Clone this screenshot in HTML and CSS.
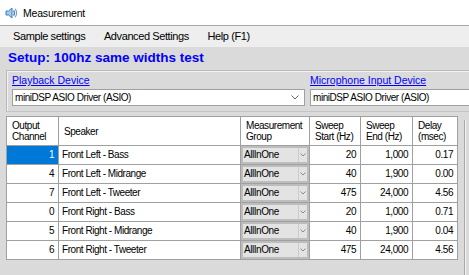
FILE: index.html
```html
<!DOCTYPE html>
<html lang="en-US">

<head>
    <title>Measurement</title>
    <meta name="viewport" content="width=device-width, initial-scale=1.0" />
    <link rel="stylesheet" href="styles.css">
</head>

<body>
    <div class="window">
        <div class="titlebar">
            <svg class="app-icon" width="13" height="12" viewBox="0 0 13 12">
                <path d="M1 4 L3.5 4 L7 1 L7 11 L3.5 8 L1 8 Z" fill="#a9cbea" stroke="#3f7fbf" stroke-width="1" stroke-linejoin="round" />
                <path d="M8.6 3.4 Q10.4 6 8.6 8.6" fill="none" stroke="#3f7fbf" stroke-width="1.3" />
                <path d="M10.2 1.8 Q13 6 10.2 10.2" fill="none" stroke="#6aa0d4" stroke-width="1.1" />
            </svg>
            <span class="title-text">Measurement</span>
        </div>

        <nav class="menubar">
            <span class="menu-item">Sample settings</span>
            <span class="menu-item">Advanced Settings</span>
            <span class="menu-item">Help (F1)</span>
        </nav>

        <main class="content">
            <h1 class="setup-title">Setup: 100hz same widths test</h1>

            <section class="devices">
                <div class="device device-playback">
                    <a href="#" class="device-link">Playback Device</a>
                    <div class="combo">
                        <span class="combo-text">miniDSP ASIO Driver (ASIO)</span>
                        <svg class="chevron" width="8" height="5" viewBox="0 0 8 5">
                            <polyline points="0.5,0.5 4,4 7.5,0.5" fill="none" stroke="#606060" stroke-width="1" />
                        </svg>
                    </div>
                </div>
                <div class="device device-mic">
                    <a href="#" class="device-link">Microphone Input Device</a>
                    <div class="textbox">miniDSP ASIO Driver (ASIO)</div>
                </div>
            </section>

            <div class="grid-area">
                <table class="grid">
                    <colgroup>
                        <col class="col-channel">
                        <col class="col-speaker">
                        <col class="col-group">
                        <col class="col-start">
                        <col class="col-end">
                        <col class="col-delay">
                    </colgroup>
                    <thead>
                        <tr>
                            <th>Output<br>Channel</th>
                            <th>Speaker</th>
                            <th>Measurement<br>Group</th>
                            <th>Sweep<br>Start (Hz)</th>
                            <th>Sweep<br>End (Hz)</th>
                            <th>Delay<br>(msec)</th>
                        </tr>
                    </thead>
                    <tbody id="rows">
                    </tbody>
                </table>
                <div class="side-panel"></div>
            </div>
        </main>
    </div>

    <script>
        const speakers = [
            [1, "Front Left - Bass", 20, "1,000", "0.17"],
            [4, "Front Left - Midrange", 40, "1,900", "0.00"],
            [7, "Front Left - Tweeter", 475, "24,000", "4.56"],
            [0, "Front Right - Bass", 20, "1,000", "0.71"],
            [5, "Front Right - Midrange", 40, "1,900", "0.04"],
            [6, "Front Right - Tweeter", 475, "24,000", "4.56"]
        ];
        const body = document.getElementById("rows");
        speakers.forEach((s, i) => {
            const row = document.createElement("tr");
            row.innerHTML =
                '<td class="num' + (i === 0 ? ' selected' : '') + '">' + s[0] + '</td>' +
                '<td>' + s[1] + '</td>' +
                '<td class="group-cell"><div class="cell-combo"><span>AllInOne</span>' +
                '<span class="cell-combo-btn"><svg width="6" height="4" viewBox="0 0 6 4">' +
                '<polyline points="0.5,0.5 3,3 5.5,0.5" fill="none" stroke="#8a8a8a" stroke-width="1"/></svg></span></div></td>' +
                '<td class="num">' + s[2] + '</td>' +
                '<td class="num">' + s[3] + '</td>' +
                '<td class="num">' + s[4] + '</td>';
            body.appendChild(row);
        });
    </script>
</body>

</html>
```

FILE: styles.css
```css
html,
body {
    margin: 0;
    padding: 0;
    height: 100%;
    overflow: hidden;
    font-family: "Liberation Sans", Arial, sans-serif;
    color: #000;
}

.window {
    height: 100%;
    display: flex;
    flex-direction: column;
    background-color: #dadada;
}

.titlebar {
    height: 25px;
    display: flex;
    align-items: center;
    padding-left: 5px;
    background-color: #fff;
    border-bottom: 1px solid #a8a8a8;
}

.app-icon {
    margin-right: 5px;
    margin-top: 1px;
}

.title-text {
    font-size: 10.5px;
    letter-spacing: -0.2px;
    line-height: 12px;
    margin-top: 1px;
}

.menubar {
    height: 21px;
    line-height: 21px;
    padding-left: 5px;
    background-color: #eeeeee;
    font-size: 11px;
    letter-spacing: -0.4px;
}

.menu-item {
    padding: 0 8px;
}

.content {
    flex: 1;
    display: flex;
    flex-direction: column;
}

.setup-title {
    margin: 0;
    padding: 3px 0 0 8px;
    height: 16px;
    line-height: 16px;
    font-size: 13.5px;
    font-weight: bold;
    color: #0000ff;
}

.devices {
    margin: 4px 0 0 6px;
    padding: 3px 0 5px 5px;
    display: flex;
    gap: 5px;
    border-top: 1px solid #b8b8b8;
    border-left: 1px solid #b8b8b8;
    border-bottom: 1px solid #c4c4c4;
    box-shadow: inset 1px 1px 0 #f2f2f2;
}

.device {
    display: flex;
    flex-direction: column;
}

.device-playback {
    width: 293px;
}

.device-mic {
    flex: 1;
}

.device-link {
    font-size: 10.5px;
    line-height: 13px;
    color: #0000ff;
    text-decoration: underline;
    margin-bottom: 2px;
    white-space: nowrap;
}

.combo,
.textbox {
    height: 15px;
    border: 1px solid #a0a0a0;
    background-color: #fff;
    font-size: 10px;
    letter-spacing: -0.45px;
    line-height: 15px;
    padding-left: 2px;
    white-space: nowrap;
}

.combo {
    display: flex;
    align-items: center;
    justify-content: space-between;
    padding-right: 5px;
}

.textbox {
    border-right: none;
}

.grid-area {
    flex: 1;
    display: flex;
    margin-top: 4px;
    padding-left: 6px;
}

.grid {
    border-collapse: collapse;
    table-layout: fixed;
    width: 451px;
    align-self: flex-start;
    background-color: #fff;
    font-size: 10px;
    letter-spacing: -0.45px;
}

.col-channel { width: 52px; }
.col-speaker { width: 182px; }
.col-group { width: 69px; }
.col-start { width: 51px; }
.col-end { width: 52px; }
.col-delay { width: 45px; }

.grid th,
.grid td {
    border: 1px solid #a0a0a0;
    padding: 0;
    white-space: nowrap;
    overflow: hidden;
}

.grid th {
    height: 28px;
    padding-left: 5px;
    text-align: left;
    vertical-align: middle;
    font-weight: normal;
    line-height: 11px;
}

.grid td {
    height: 18px;
    line-height: 18px;
    padding-left: 3px;
}

.grid td.num {
    text-align: right;
    padding-right: 4px;
    padding-left: 0;
}

.grid td.selected {
    background-color: #0078d7;
    color: #fff;
}

.grid td.group-cell {
    padding: 0;
}

.cell-combo {
    height: 14px;
    display: flex;
    align-items: center;
    justify-content: space-between;
    border: 2px solid #bdbdbd;
    background-color: #e3e3e3;
    line-height: 14px;
    padding-left: 1px;
}

.cell-combo-btn {
    width: 8px;
    height: 14px;
    display: flex;
    align-items: center;
    justify-content: center;
    border-left: 1px solid #cccccc;
}

.side-panel {
    flex: 1;
    margin: 4px 0 0 6px;
    border-left: 1px solid #a8a8a8;
    box-shadow: inset 1px 0 0 #f4f4f4;
}
```
